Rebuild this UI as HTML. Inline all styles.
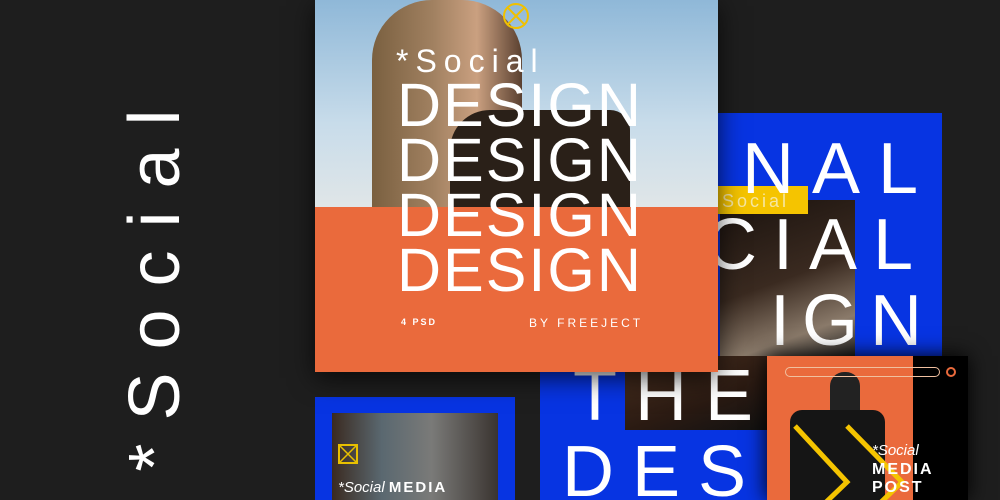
<!DOCTYPE html>
<html><head><meta charset="utf-8"><style>
*{margin:0;padding:0;box-sizing:border-box}
body{width:1000px;height:500px;background:#1e1e1e;overflow:hidden;position:relative;font-family:"Liberation Sans",sans-serif;color:#fff}
.a{position:absolute}
.vt{position:absolute;left:155px;top:279px;transform:translate(-50%,-50%) rotate(-90deg);font-size:72px;letter-spacing:23px;white-space:nowrap;line-height:1}
.big{font-size:72px;line-height:1;white-space:nowrap;position:absolute}
</style></head><body>
<div class="vt">*Social</div>

<!-- big blue board -->
<div class="a" style="left:718px;top:113px;width:224px;height:243px;background:#0734e2;overflow:hidden">
  <div class="a" style="left:2px;top:87px;width:135px;height:156px;background:linear-gradient(160deg,#1a120e,#3a2a20 50%,#8a7a6a 80%,#222)"></div>
  <div class="a" style="left:0;top:73px;width:90px;height:28px;background:#f5c400"></div>
  <div class="a" style="left:4px;top:78px;font-size:18px;letter-spacing:3px;color:#f6e6a0">Social</div>
  <div class="big" style="left:24px;top:20px;letter-spacing:18px">NAL</div>
  <div class="big" style="left:-13px;top:96px;letter-spacing:16px">CIAL</div>
  <div class="big" style="left:52px;top:172px;letter-spacing:12px">IGN</div>
</div>
<div class="a" style="left:540px;top:356px;width:230px;height:144px;background:#0734e2;overflow:hidden">
  <div class="a" style="left:85px;top:0;width:145px;height:74px;background:linear-gradient(160deg,#4a3020,#2a1a12 60%,#111)"></div>
  <div class="big" style="left:33px;top:4px;letter-spacing:18px">THE</div>
  <div class="big" style="left:22px;top:80px;letter-spacing:18px">DES</div>
</div>

<!-- bottom left card -->
<div class="a" style="left:315px;top:397px;width:200px;height:103px;background:#0734e2"></div>
<div class="a" style="left:332px;top:413px;width:166px;height:87px;background:linear-gradient(90deg,#3a2a20,#5a6870 30%,#7a7a78 60%,#3a3430)"></div>
<div class="a" style="left:338px;top:444px;width:20px;height:20px;border:2px solid #e8c000"></div>
<svg class="a" style="left:338px;top:444px" width="20" height="20"><path d="M0 0L20 20M20 0L0 20" stroke="#e8c000" stroke-width="1.5"/></svg>
<div class="a" style="left:338px;top:479px;font-size:15px"><i>*Social</i> <b style="letter-spacing:2px">MEDIA</b></div>

<!-- bottom right card -->
<div class="a" style="left:767px;top:356px;width:201px;height:144px;background:#000;box-shadow:0 0 20px #000"></div>
<div class="a" style="left:767px;top:356px;width:146px;height:144px;background:#ea6a3c"></div>
<div class="a" style="left:830px;top:372px;width:30px;height:50px;background:#222;border-radius:14px 14px 4px 4px"></div>
<div class="a" style="left:790px;top:410px;width:95px;height:90px;background:#151515;border-radius:12px 12px 0 0"></div>
<div class="a" style="left:785px;top:367px;width:155px;height:10px;border:1px solid #f0c0a0;border-radius:6px"></div>
<div class="a" style="left:946px;top:367px;width:10px;height:10px;border:2px solid #ea6a3c;border-radius:50%"></div>
<svg class="a" style="left:767px;top:356px" width="201" height="144"><path d="M28 70L80 126L55 150M80 70L135 126L110 150" fill="none" stroke="#f5c400" stroke-width="5"/></svg>
<div class="a" style="left:872px;top:442px;font-size:15px;font-style:italic">*Social</div>
<div class="a" style="left:872px;top:461px;font-size:16px;font-weight:bold;letter-spacing:2px;line-height:18px">MEDIA<br>POST</div>

<!-- main card -->
<div class="a" style="left:315px;top:0;width:403px;height:372px;background:#ea6a3c;box-shadow:0 6px 24px rgba(0,0,0,.7)"></div>
<div class="a" style="left:315px;top:0;width:403px;height:207px;background:linear-gradient(180deg,#8fb8d8,#c8dcea 60%,#e0e6e8)"></div>
<div class="a" style="left:372px;top:0;width:150px;height:207px;background:linear-gradient(90deg,#7a6040,#a08060 40%,#caa080 70%,#5a4030);border-radius:60px 60px 0 0"></div>
<div class="a" style="left:450px;top:110px;width:180px;height:97px;background:#2a2018;border-radius:40px 20px 0 0"></div>
<svg class="a" style="left:502px;top:2px" width="28" height="28"><circle cx="14" cy="14" r="12" fill="none" stroke="#f0c000" stroke-width="2"/><path d="M6 6L22 22M22 6L6 22" stroke="#f0c000" stroke-width="2"/></svg>
<div class="a" style="left:396px;top:45px;font-size:32px;letter-spacing:7px;line-height:1">*Social</div>
<div class="a" style="left:397px;top:78px;font-size:61px;line-height:55px;letter-spacing:2px">DESIGN<br>DESIGN<br>DESIGN<br>DESIGN</div>
<div class="a" style="left:401px;top:317px;font-size:9px;letter-spacing:2px;font-weight:bold">4 PSD</div>
<div class="a" style="left:529px;top:316px;font-size:12px;letter-spacing:3px">BY FREEJECT</div>
</body></html>
